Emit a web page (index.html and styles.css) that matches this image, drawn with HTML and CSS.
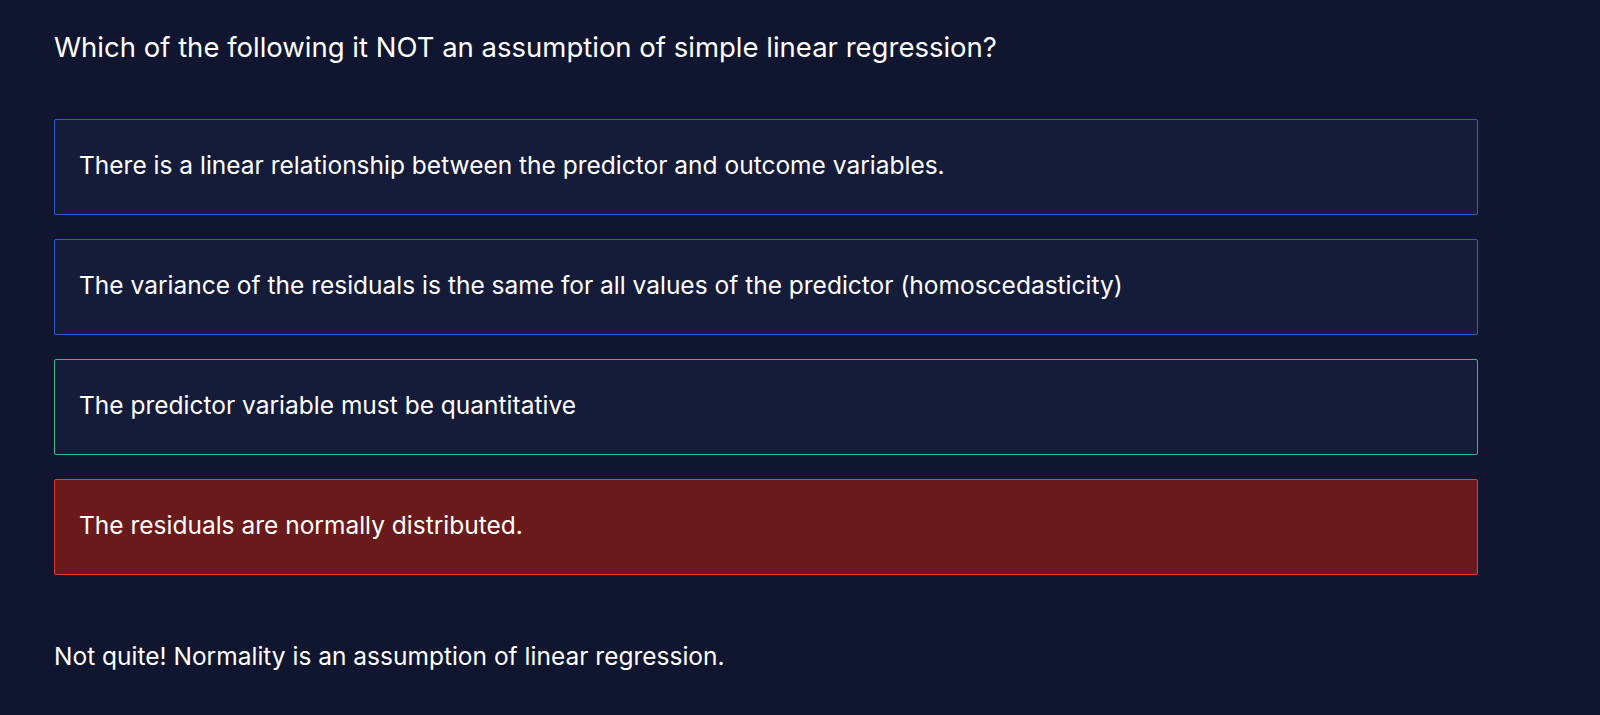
FILE: index.html
```html
<!DOCTYPE html>
<html>
<head>
<meta charset="utf-8">
<link rel="stylesheet" href="styles.css">
</head>
<body>
<main class="quiz">
  <h1 class="question">Which of the following it NOT an assumption of simple linear regression?</h1>
  <div class="options">
    <div class="option option-blue">There is a linear relationship between the predictor and outcome variables.</div>
    <div class="option option-blue">The variance of the residuals is the same for all values of the predictor (homoscedasticity)</div>
    <div class="option option-green">The predictor variable must be quantitative</div>
    <div class="option option-red">The residuals are normally distributed.</div>
  </div>
  <p class="feedback">Not quite! Normality is an assumption of linear regression.</p>
</main>
</body>
</html>
```
FILE: styles.css
```css
html, body {
  margin: 0;
  padding: 0;
  background: #10162f;
  height: 100%;
}
body {
  font-family: "Inter", "Noto Sans", sans-serif;
  color: #ffffff;
}
.quiz {
  padding: 27px 0 0 54px;
  width: 1424px;
}
.question {
  margin: 0;
  font-size: 27.5px;
  font-weight: 400;
  line-height: 40px;
}
.options {
  margin-top: 52px;
  display: flex;
  flex-direction: column;
  gap: 24px;
}
.option {
  box-sizing: border-box;
  height: 96px;
  display: flex;
  align-items: center;
  padding: 0 24px;
  border: 1px solid #2f5dd0;
  border-radius: 2px;
  background: #151c3a;
  font-size: 24.5px;
  padding-bottom: 4px;
}
.option-green {
  border-color: #35b98a;
}
.option-red {
  border-color: #e0393e;
  background: #6a1a1a;
}
.feedback {
  margin: 65px 0 0;
  font-size: 24.5px;
  line-height: 32px;
}
```
